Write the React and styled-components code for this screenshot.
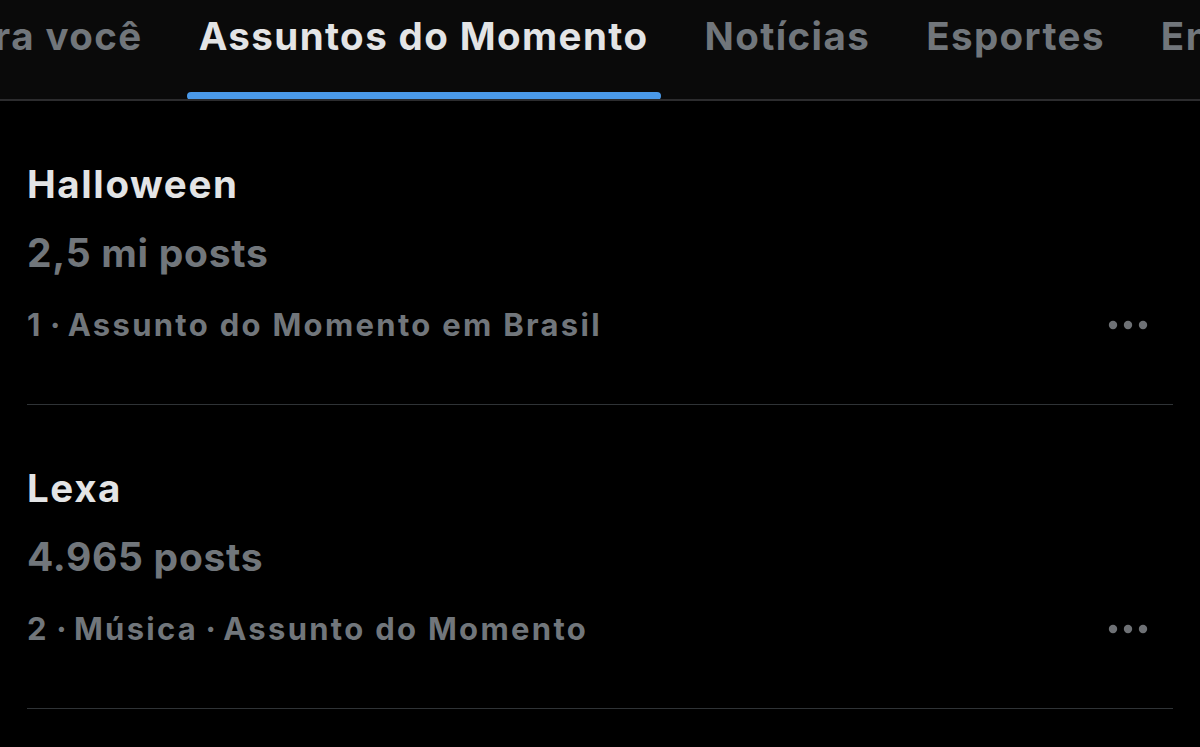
import React from "react";
import styled, { createGlobalStyle } from "styled-components";

const Global = createGlobalStyle`
  html, body { margin: 0; padding: 0; background: #000; }
  body { font-family: Inter, "Noto Sans", "Liberation Sans", sans-serif; -webkit-font-smoothing: antialiased; }
  #root { width: 1200px; height: 747px; overflow: hidden; background: #000; }
`;

const Page = styled.div`
  width: 1200px;
  height: 747px;
  background: #000;
  display: flex;
  flex-direction: column;
`;

const Header = styled.nav`
  height: 101px;
  box-sizing: border-box;
  background: #0a0a0a;
  border-bottom: 2px solid #2c2c2e;
  overflow: hidden;
  flex-shrink: 0;
`;

const TabStrip = styled.div`
  display: flex;
  height: 99px;
  margin-left: ${(p) => p.$offset}px;
  white-space: nowrap;
`;

const Tab = styled.div`
  position: relative;
  padding: 13px 28px 0;
  font-size: 38.5px;
  line-height: 46px;
  font-weight: 700;
  letter-spacing: 1.4px;
  color: ${(p) => (p.$active ? "#e3e4e5" : "#71767b")};
  flex-shrink: 0;

  &::after {
    content: "";
    display: ${(p) => (p.$active ? "block" : "none")};
    position: absolute;
    left: 16px;
    right: 15px;
    bottom: -1px;
    height: 8px;
    border-radius: 4px;
    background: #4a99e9;
  }
`;

const List = styled.div`
  display: flex;
  flex-direction: column;
`;

const Item = styled.div`
  margin: 0 27px;
  padding: 60px 0 61px;
  border-bottom: 1px solid #2f3336;
  display: flex;
  flex-direction: column;
`;

const Title = styled.div`
  font-size: 38.5px;
  line-height: 46px;
  font-weight: 700;
  letter-spacing: 1.6px;
  color: #e3e4e5;
`;

const Count = styled.div`
  margin-top: 22px;
  font-size: 39px;
  line-height: 48px;
  font-weight: 700;
  letter-spacing: 0.7px;
  color: #71767b;
`;

const MetaRow = styled.div`
  margin-top: 30px;
  display: flex;
  align-items: center;
  justify-content: space-between;
  padding-right: 25px;
`;

const Meta = styled.span`
  font-size: 31px;
  line-height: 36px;
  font-weight: 700;
  letter-spacing: 2.3px;
  color: #71767b;
`;

const Sep = styled.span`
  letter-spacing: 0;
`;

const Dots = styled.svg`
  width: 40px;
  height: 10px;
  display: block;
`;

const MoreIcon = () => (
  <Dots viewBox="0 0 40 10" aria-hidden="true">
    <circle cx="5" cy="5" r="4.2" fill="#6e7175" />
    <circle cx="20" cy="5" r="4.2" fill="#6e7175" />
    <circle cx="35" cy="5" r="4.2" fill="#6e7175" />
  </Dots>
);

const tabs = ["Para você", "Assuntos do Momento", "Notícias", "Esportes", "Entretenimento"];

const trends = [
  { title: "Halloween", count: "2,5 mi posts", meta: ["1", "Assunto do Momento em Brasil"] },
  { title: "Lexa", count: "4.965 posts", meta: ["2", "Música", "Assunto do Momento"] },
];

export default function App() {
  return (
    <Page>
      <Global />
      <Header>
        <TabStrip $offset={-83}>
          {tabs.map((t, i) => (
            <Tab key={t} $active={i === 1}>
              {t}
            </Tab>
          ))}
        </TabStrip>
      </Header>
      <List>
        {trends.map((t) => (
          <Item key={t.title}>
            <Title>{t.title}</Title>
            <Count>{t.count}</Count>
            <MetaRow>
              <Meta>
                {t.meta.map((part, i) => (
                  <React.Fragment key={part}>
                    {i > 0 && <Sep> · </Sep>}
                    {part}
                  </React.Fragment>
                ))}
              </Meta>
              <MoreIcon />
            </MetaRow>
          </Item>
        ))}
      </List>
    </Page>
  );
}
